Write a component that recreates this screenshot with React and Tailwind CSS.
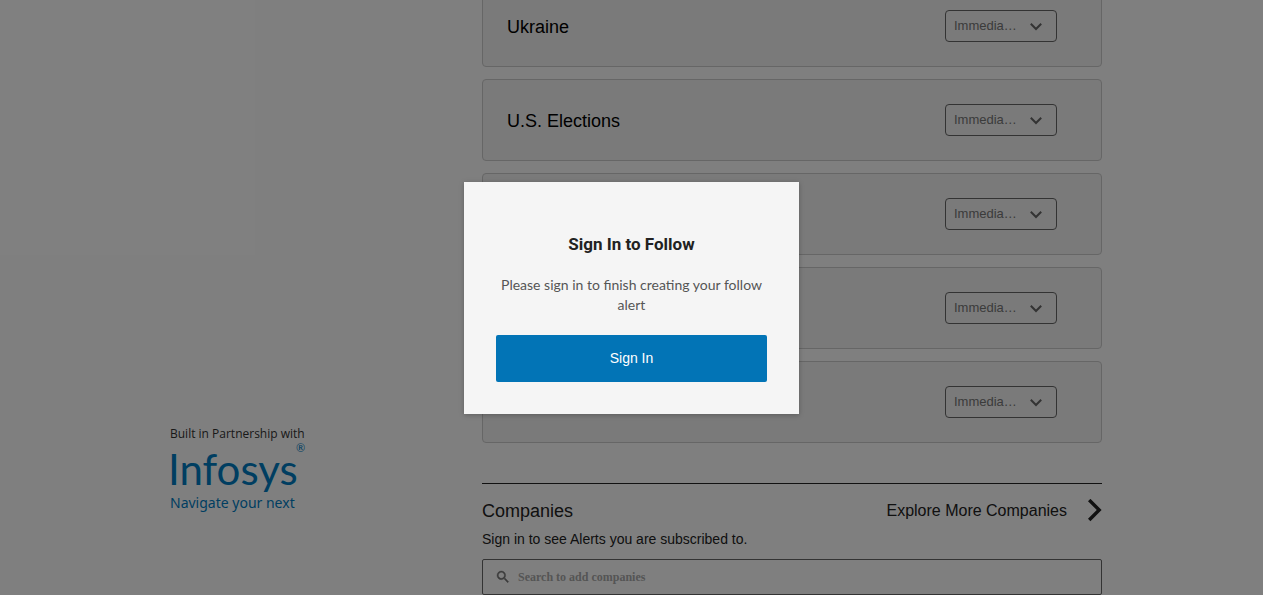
import React from "react";

const topics = [
  { id: "ukraine", title: "Ukraine" },
  { id: "elections", title: "U.S. Elections" },
  { id: "topic-3", title: "" },
  { id: "topic-4", title: "" },
  { id: "topic-5", title: "" },
];

function FrequencySelect({ id }) {
  return (
    <div className="relative">
      <select
        id={id}
        aria-label="Alert frequency"
        className="block h-8 w-28 appearance-none truncate rounded-[4px] border border-[#666] bg-transparent pl-2 pr-9 text-[13px] text-[#777]"
      >
        <option>Immediately</option>
        <option>Daily</option>
      </select>
      <svg
        viewBox="0 0 12 8"
        className="pointer-events-none absolute right-[15px] top-[13px] h-2 w-3"
        fill="none"
        stroke="#666"
        strokeWidth="2"
        aria-hidden="true"
      >
        <path d="M0.8 0.8 L6 6 L11.2 0.8" />
      </svg>
    </div>
  );
}

function TopicCard({ topic }) {
  return (
    <li className="flex h-[82px] items-center justify-between rounded-[4px] border border-[#ccc] bg-[#f4f4f4] pl-6 pr-11">
      <h3 className="pt-0.5 text-lg text-black">{topic.title}</h3>
      <FrequencySelect id={topic.id} />
    </li>
  );
}

function Partner() {
  return (
    <aside className="w-[312px] shrink-0 pt-[426px]">
      <p className="font-['Open_Sans',sans-serif] text-xs leading-4 text-[#333]">Built in Partnership with</p>
      <svg viewBox="0 0 140 74" className="h-[74px] w-[140px] overflow-visible" role="img" aria-label="Infosys, Navigate your next">
        <g fill="#007cc3">
          <text x="-2" y="43" fontSize="42" fontFamily="Lato, sans-serif">Infosys</text>
          <text x="126" y="10" fontSize="11" fontFamily="Lato, sans-serif">®</text>
          <text x="0" y="66" fontSize="14" fontFamily="'Noto Sans', sans-serif">Navigate your next</text>
        </g>
      </svg>
    </aside>
  );
}

function Companies() {
  return (
    <section className="mt-10 border-t border-[#222] pt-[13px]">
      <div className="flex h-7 items-center justify-between">
        <h2 className="text-lg text-[#222]">Companies</h2>
        <a href="#companies" className="flex items-center gap-5 text-base text-[#222]">
          Explore More Companies
          <svg viewBox="0 0 15 24" className="h-6 w-[15px]" fill="none" stroke="#222" strokeWidth="3.4" aria-hidden="true">
            <path d="M2.2 1 L12.2 11 L2.2 21" />
          </svg>
        </a>
      </div>
      <p className="mt-0.5 text-sm leading-6 text-[#222]">Sign in to see Alerts you are subscribed to.</p>
      <label className="mt-2 flex h-9 items-center gap-[7px] rounded-[2px] border border-[#666] pl-3">
        <svg viewBox="0 0 24 24" className="h-4 w-4 shrink-0" fill="#777" stroke="#777" strokeWidth="0.6" aria-hidden="true">
          <path d="M15.5 14h-.79l-.28-.27A6.47 6.47 0 0 0 16 9.5 6.5 6.5 0 1 0 9.5 16c1.61 0 3.09-.59 4.23-1.57l.27.28v.79l5 4.99L20.49 19zm-6 0C7.01 14 5 11.99 5 9.5S7.01 5 9.5 5 14 7.01 14 9.5 11.99 14 9.5 14" />
        </svg>
        <input
          type="text"
          aria-label="Search to add companies"
          placeholder="Search to add companies"
          className="min-w-0 flex-1 bg-transparent font-['Liberation_Serif',serif] text-xs font-bold outline-none placeholder:text-[#aaa]"
        />
      </label>
    </section>
  );
}

function SignInDialog() {
  return (
    <div className="absolute inset-y-0 left-0 right-[17px] flex items-center justify-center bg-black/50">
      <div
        role="dialog"
        aria-modal="true"
        aria-labelledby="dialog-title"
        className="w-[335px] bg-[#f5f5f5] px-8 pb-8 pt-12 text-center shadow-[0_1px_5px_rgba(0,0,0,0.25)]"
      >
        <h1
          id="dialog-title"
          className="font-[Roboto,sans-serif] text-[17px] font-bold leading-7 text-[#222]"
        >
          Sign In to Follow
        </h1>
        <p className="mt-[17px] font-[Lato,sans-serif] text-sm leading-5 text-[#555]">
          Please sign in to finish creating your follow alert
        </p>
        <button type="button" className="mt-5 h-[47px] w-full rounded-[2px] bg-[#0274b6] text-sm text-white">
          Sign In
        </button>
      </div>
    </div>
  );
}

export default function App() {
  return (
    <div className="relative h-screen overflow-hidden bg-white font-['Liberation_Sans',Arial,sans-serif]">
      <div className="mr-[17px] flex justify-center pl-[9px]">
        <Partner />
        <main className="-mt-[15px] w-[620px]">
          <ul className="flex flex-col gap-3">
            {topics.map((topic) => (
              <TopicCard key={topic.id} topic={topic} />
            ))}
          </ul>
          <Companies />
        </main>
      </div>
      <SignInDialog />
    </div>
  );
}
